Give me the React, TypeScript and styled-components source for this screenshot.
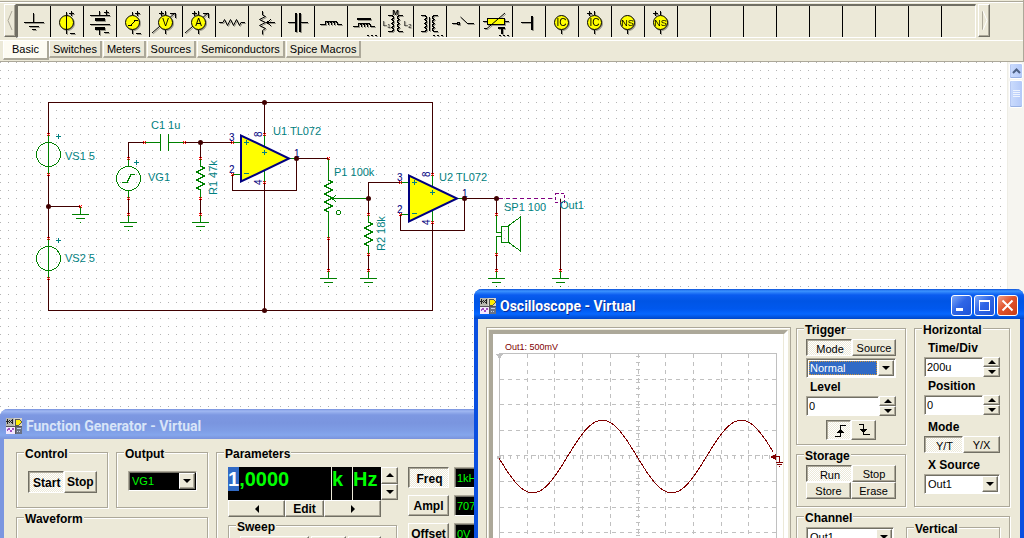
import React from "react";
import styled, { createGlobalStyle, css } from "styled-components";

const face = "#ece9d8";
const shade = "#aca899";
const dark = "#716f64";
const ui = `"Liberation Sans", Arial, sans-serif`;

const GlobalStyle = createGlobalStyle`
  *, *::before, *::after { box-sizing: border-box; }
  body { margin: 0; background: #fff; font: 11px/14px ${ui}; color: #000; }
  button, input, select { font: inherit; color: inherit; margin: 0; padding: 0; border-radius: 0; }
  svg { display: block; }
`;

const Page = styled.div`
  display: flex;
  flex-direction: column;
  height: 100vh;
  overflow: hidden;
`;

/* ---------- component palette ---------- */

const Header = styled.header`
  flex: none;
  padding-top: 1px;
  background: ${face};
  border-right: 1px solid ${shade};
  border-bottom: 1px solid ${shade};
`;

const Rule = styled.div`
  height: 2px;
  border-top: 1px solid ${shade};
  border-bottom: 1px solid #fff;
`;

const PaletteRow = styled.div`
  display: flex;
  align-items: flex-start;
  gap: 2px;
  padding: 1px 0 2px 4px;
`;

const raised = css`
  border: 1px solid;
  border-color: #fff ${dark} ${dark} #fff;
  box-shadow: inset -1px -1px 0 ${shade};
`;

const checker = css`
  background: repeating-conic-gradient(#fff 0 25%, ${face} 0 50%) 0 0 / 2px 2px;
`;

const PaletteArrow = styled.button`
  flex: none;
  width: 12px;
  height: 33px;
  background: ${face};
  ${raised}
`;

const PaletteStrip = styled.div`
  display: flex;
  min-width: 0;
  overflow: hidden;
  border: solid;
  border-width: 2px 1px 1px 2px;
  border-color: ${dark} #fff #fff ${dark};
  margin-left: -2px;
`;

const PaletteCell = styled.button`
  flex: none;
  width: 33px;
  height: 31px;
  background: ${face};
  border: 0;
  border-right: 1px solid #000;
  &:last-child { border-right: 0; }
  svg { filter: drop-shadow(1px 1px 0 #9a988c); }
`;

const TabBar = styled.nav`
  display: flex;
  align-items: flex-start;
  height: 21px;
  padding-left: 3px;
  border-top: 1px solid #fff;
`;

const Tab = styled.button<{ $on?: boolean }>`
  height: ${(p) => (p.$on ? 19 : 17)}px;
  padding: 0 ${(p) => (p.$on ? 8 : 3)}px;
  margin-right: ${(p) => (p.$on ? 0 : 1)}px;
  background: ${(p) => (p.$on ? "#fdfbf2" : face)};
  border: solid;
  border-width: 0 2px 2px 1px;
  border-color: #fff ${shade} ${shade} #fff;
  line-height: ${(p) => (p.$on ? 15 : 17)}px;
`;

/* ---------- sheet ---------- */

const Sheet = styled.main`
  position: relative;
  flex: 1;
  min-height: 0;
  overflow: hidden;
  display: flex;
  background: #fff;
`;

const Drawing = styled.div`
  flex: 1;
  min-width: 0;
  overflow: hidden;
  background: conic-gradient(from 270deg at 1px 1px, #b4b4b4 90deg, #fff 0) 0 0 / 8px 8px;
`;

const ScrollTrack = styled.div`
  flex: none;
  display: flex;
  flex-direction: column;
  gap: 1px;
  width: 17px;
  padding: 1px;
  background: #f6f5f0;
  border-left: 1px solid #eeede5;
`;

const ScrollPiece = styled.button<{ $thumb?: boolean }>`
  display: flex;
  align-items: center;
  justify-content: center;
  height: ${(p) => (p.$thumb ? 28 : 16)}px;
  background: linear-gradient(90deg, #cbdcfd, #b4c9f8);
  border: 1px solid #fff;
  border-radius: 2px;
  box-shadow: inset 0 -1px 0 #98b1e4, inset 1px 0 0 #b6c8f3;
`;

/* ---------- windows ---------- */

const Window = styled.section<{ $active?: boolean }>`
  position: absolute;
  background: ${face};
  border: solid;
  border-width: 0 4px 4px;
  border-color: ${(p) => (p.$active ? "#0a4fe0" : "#7b96e0")};
  border-radius: 8px 8px 0 0;
`;

const FunctionWindow = styled(Window)`
  left: 0;
  top: 347px;
  width: 560px;
`;

const ScopeWindow = styled(Window)`
  left: 474px;
  right: 0;
  top: 227px;
`;

const TitleBar = styled.header<{ $active?: boolean }>`
  display: flex;
  align-items: center;
  height: 30px;
  margin: 0 -4px;
  padding: 3px 6px 0;
  border-radius: 8px 8px 0 0;
  background: ${(p) =>
    p.$active
      ? "linear-gradient(#0a4fd8 0, #3c94ff 2px, #0a5cf0 6px, #0055e5 12px, #0058ee 20px, #0667ff 25px, #0046c8 30px)"
      : "linear-gradient(#7690de 0, #a0b8f2 2px, #7d98e2 6px, #7a95df 14px, #7f9ee6 22px, #84a6ec 26px, #7a93dc 30px)"};
`;

const Title = styled.h1<{ $active?: boolean }>`
  flex: 1;
  margin: 1px 0 0 4px;
  font: bold 14px/16px Roboto, "Open Sans", sans-serif;
  color: ${(p) => (p.$active ? "#fff" : "#d8e4f8")};
  ${(p) => (p.$active ? "text-shadow: 1px 1px 0 #0b2f97;" : "")}
`;

const Captions = styled.div`
  display: flex;
  gap: 2px;
`;

const Caption = styled.button<{ $close?: boolean }>`
  width: 21px;
  height: 21px;
  border: 1px solid #fff;
  border-radius: 3px;
  background: ${(p) =>
    p.$close
      ? "linear-gradient(135deg, #f0a088, #e2532c 45%, #c83c14)"
      : "linear-gradient(135deg, #7ea8f8, #2f66e6 45%, #1f54d8)"};
`;

const Group = styled.fieldset`
  min-width: 0;
  margin: 0;
  padding: 3px 9px 5px;
  border: 1px solid ${shade};
  box-shadow: inset 1px 1px 0 #fff, 1px 1px 0 #fff;
`;

const Legend = styled.legend<{ $wide?: boolean }>`
  margin-left: ${(p) => (p.$wide ? -4 : -2)}px;
  padding: 4px 1px 0;
  background: ${face};
  font-weight: bold;
  font-size: 12px;
  line-height: 12px;
`;

const Push = styled.button<{ $down?: boolean; $w?: number; $h?: number; $bold?: boolean }>`
  display: flex;
  align-items: center;
  justify-content: center;
  flex: ${(p) => (p.$w ? "none" : "1")};
  ${(p) => (p.$w ? `width: ${p.$w}px;` : "min-width: 0;")}
  height: ${(p) => p.$h ?? 17}px;
  background: ${face};
  ${raised}
  ${(p) => (p.$bold ? "font-weight: bold; font-size: 12px;" : "")}
  ${(p) =>
    p.$down &&
    css`
      ${checker}
      border-color: ${dark} #fff #fff ${dark};
      box-shadow: inset 1px 1px 0 ${shade};
      padding: 2px 0 0 2px;
    `}
`;

const Row = styled.div<{ $gap?: number }>`
  display: flex;
  gap: ${(p) => p.$gap ?? 0}px;
`;

const Stack = styled.div<{ $gap?: number }>`
  display: flex;
  flex-direction: column;
  gap: ${(p) => p.$gap ?? 0}px;
`;

const sunken = css`
  border: 1px solid;
  border-color: ${shade} #fff #fff ${shade};
  box-shadow: inset 1px 1px 0 ${dark};
`;

const ComboBox = styled.div<{ $dark?: boolean; $lit?: boolean }>`
  display: flex;
  height: 20px;
  padding: 1px;
  background: ${(p) => (p.$dark ? "#000" : "#fff")};
  ${sunken}
  select {
    flex: 1;
    min-width: 0;
    appearance: none;
    border: 0;
    margin: ${(p) => (p.$lit ? 1 : 0)}px;
    padding-left: ${(p) => (p.$lit ? 1 : 2)}px;
    background: ${(p) => (p.$lit ? "#316ac5" : "transparent")};
    color: ${(p) => (p.$dark ? "#00ff00" : p.$lit ? "#fff" : "#000")};
    ${(p) => (p.$lit ? "outline: 1px dotted #ce953a; outline-offset: -1px;" : "")}
  }
`;

const Drop = styled.span`
  display: flex;
  align-items: center;
  justify-content: center;
  flex: none;
  width: 16px;
  background: ${face};
  pointer-events: none;
  ${raised}
`;

const FieldLabel = styled.label`
  display: block;
  padding-left: 4px;
  font-weight: bold;
  font-size: 12px;
`;

const FieldTitle = styled(FieldLabel).attrs({ as: "span" })``;

const Spin = styled.div`
  display: flex;
  height: 20px;
  input {
    flex: 1;
    min-width: 0;
    padding-left: 2px;
    background: #fff;
    border-width: 1px;
    outline: 0;
    ${sunken}
  }
`;

const SpinButtons = styled.div`
  display: flex;
  flex-direction: column;
  flex: none;
  width: 17px;
  button {
    display: flex;
    align-items: center;
    justify-content: center;
    flex: 1;
    background: ${face};
    ${raised}
  }
`;

/* ---------- function generator ---------- */

const GeneratorBody = styled.div`
  display: flex;
  gap: 8px;
  padding: 5px 12px 12px;
`;

const SideColumn = styled.div`
  display: flex;
  flex-direction: column;
  gap: 1px;
  width: 192px;
`;

const SideGroups = styled.div`
  display: flex;
  gap: 8px;
`;

const SideGroup = styled(Group)`
  flex: 1;
  height: 64px;
  padding: 11px 10px 0 11px;
`;

const WaveGroup = styled(Group)`
  height: 110px;
`;

const ParameterGroup = styled(Group)`
  flex: 1;
  display: flex;
  gap: 11px;
  padding: 7px 11px;
`;

const ParameterBox = styled.div`
  display: flex;
  flex: 1;
  gap: 10px;
`;

const Readouts = styled.div`
  display: flex;
  gap: 1px;
  height: 33px;
  font: bold 20px/24px ${ui};
  color: #00ff00;
`;

const Digits = styled.output<{ $w: number }>`
  flex: none;
  width: ${(p) => p.$w}px;
  background: #000;
  b {
    display: inline-block;
    background: #316ac5;
    color: #fff;
  }
`;

const TallSpin = styled(SpinButtons)`
  height: 33px;
  width: 17px;
  margin-left: -1px;
`;

const SweepGroup = styled(Group)`
  width: 169px;
  height: 90px;
  padding: 3px 11px;
`;

const Value = styled.input`
  flex: 1;
  width: 80px;
  min-width: 0;
  height: 21px;
  padding: 0 2px;
  background: #000;
  color: #00ff00 !important;
  ${sunken}
`;

/* ---------- oscilloscope ---------- */

const ScopeBody = styled.div`
  display: flex;
  gap: 5px;
  padding: 1px 10px 10px 8px;
`;

const ScreenFrame = styled.div`
  flex: 1;
  min-width: 0;
  margin-top: 7px;
  padding: 2px;
  border: 1px solid ${shade};
  box-shadow: inset 1px 1px 0 #fff;
`;

const Screen = styled.div`
  height: 100%;
  overflow: hidden;
  background: #fff;
  border: 4px solid;
  border-color: ${shade} #fff #fff ${shade};
  box-shadow: inset -1px 0 0 ${face};
`;

const ControlColumn = styled.div`
  flex: none;
  display: flex;
  flex-direction: column;
  gap: 1px;
  width: 214px;
`;

const ControlGrid = styled.div`
  display: grid;
  grid-template-columns: 110px 96px;
  column-gap: 8px;
`;

const TriggerGroup = styled(Group)`
  height: 125px;
`;

const StorageGroup = styled(Group)`
  height: 61px;
`;

const HorizontalGroup = styled(Group)`
  padding-top: 5px;
`;

const ChannelGroup = styled(Group)`
  display: block;
  height: 110px;
`;

const ChannelRow = styled.div`
  display: flex;
  align-items: flex-start;
  gap: 12px;
`;

const VerticalGroup = styled(Group)`
  flex: 1;
  height: 90px;
  margin-top: -8px;
`;

const EdgeRow = styled.div`
  display: flex;
  justify-content: center;
  padding-top: 4px;
`;

const Spaced = styled.div`
  display: flex;
  flex-direction: column;
  gap: 2px;
  padding-top: 5px;
`;

const ChannelPick = styled.div`
  width: 88px;
`;

/* ---------- small glyphs ---------- */

const Triangle = ({ dir, s = 4 }: { dir: "up" | "down" | "left" | "right"; s?: number }) => {
  const d = {
    up: `M0 ${s}L${s} 0L${2 * s} ${s}Z`,
    down: `M0 0L${2 * s} 0L${s} ${s}Z`,
    left: `M${s} 0L0 ${s}L${s} ${2 * s}Z`,
    right: `M0 0L${s} ${s}L0 ${2 * s}Z`,
  }[dir];
  const v = dir === "up" || dir === "down";
  return (
    <svg width={v ? 2 * s : s} height={v ? s : 2 * s}>
      <path d={d} />
    </svg>
  );
};

const AppIcon = () => (
  <svg width="16" height="16" shapeRendering="crispEdges">
    <rect width="16" height="16" fill="#d8d4c8" />
    <rect width="8" height="8" fill="#b8b8b0" />
    <path d="M0 3h3M1 1v5M3 2l3 3M3 5l3-3M6 1v5" stroke="#222" fill="none" />
    <path d="M9 1h4l3 3l-3 3h-4z" fill="#ffee00" stroke="#555" />
    <rect x="0" y="8" width="9" height="8" fill="#f4e8ff" />
    <path d="M1 13l2-3l2 4l2-4l1 2" stroke="#a050c0" fill="none" />
    <rect x="10" y="9" width="6" height="7" fill="#6a7284" />
    <path d="M11 10.500h4M11 13.500h1M13 13.500h1" stroke="#c8d4e8" />
    <path d="M0 8h16M9.500 8v8" stroke="#555" />
  </svg>
);

const disc = <circle cx="15.500" cy="15.500" r="7" fill="#ffff00" stroke="#000" shapeRendering="auto" />;
const dots = <path d="M19 28.500h2M23 28.500h2M27 28.500h2" stroke="#000" />;
const plus = (x: number, y: number) => <path d={`M${x - 2} ${y + 0.5}h5M${x + 0.5} ${y - 2}v5`} />;
const glyph = (x: number, y: number, t: string, s = 10, bold = false) => (
  <text x={x} y={y} fontSize={s} fontFamily="Liberation Sans" fontWeight={bold ? 700 : 400} textAnchor="middle" fill="#000" stroke="none">
    {t}
  </text>
);

const paletteIcons: [string, React.ReactNode][] = [
  ["Ground", <><path d="M15.500 6v9" /><path d="M6 15.500h20M11 19.500h10M14 22.500h4" /></>],
  ["Voltage source", <>{disc}<path d="M15.500 5v22M19 26.500h5" />{plus(20, 6)}</>],
  ["Battery", <><path d="M15.500 4v4M6 8.500h20M6 17.500h20M15.500 22v6M20 25.500h5" /><path d="M11 12.500h10M11 21.500h10" strokeWidth="3" />{plus(22, 5)}</>],
  ["Voltage generator", <>{disc}<path d="M15.500 5v3M15.500 23v4M19 26.500h5M11 18.500h3l4-5h3" />{plus(20, 6)}</>],
  ["Voltmeter", <><path d="M2 26L25 6" shapeRendering="auto" /><path d="M20 6.500h5v4M15.500 4v4M15.500 23v4" />{disc}{glyph(15.5, 19, "V")}{plus(11, 6)}</>],
  ["Ammeter", <><path d="M2 26L25 6" shapeRendering="auto" /><path d="M20 6.500h5v4M15.500 4v4M15.500 23v4" />{disc}{glyph(15.5, 19, "A")}{plus(11, 6)}</>],
  ["Resistor", <path d="M3 15.500h4l1.500-3l3 6l3-6l3 6l3-6l3 6l1.500-3h4" shapeRendering="auto" />],
  ["Potentiometer", <><path d="M13.500 4v4l3 1.500l-6 3l6 3l-6 3l6 3l-3 2v4" shapeRendering="auto" /><path d="M18 15.500h8M22 12l-4 3.500l4 3.500" /></>],
  ["Capacitor", <><path d="M6 15.500h7M18 15.500h8" /><path d="M14 6v19M18 6v19" strokeWidth="2" /></>],
  ["Inductor", <path d="M5 17.500h5v-2q1.500-3 3 0v2v-2q1.500-3 3 0v2v-2q1.500-3 3 0v2v-2q1.500-3 3 0v2h5" />],
  ["Coil with core", <><path d="M5 19.500h5v-2q1.500-3 3 0v2v-2q1.500-3 3 0v2v-2q1.500-3 3 0v2v-2q1.500-3 3 0v2h5" /><path d="M9 12h14" strokeWidth="2" />{dots}</>],
  ["Coupled inductors", <>{glyph(14.5, 8, "M", 8, true)}{glyph(4, 19, "L", 8)}{glyph(8, 21, "1", 6)}{glyph(25, 19, "L", 8)}{glyph(29, 21, "2", 6)}<path d="M7 8.500h4q3 2 0 4q3 2 0 4q3 2 0 4q3 2 0 4h-4M22 8.500h-4q-3 2 0 4q-3 2 0 4q-3 2 0 4q-3 2 0 4h4" /></>],
  ["Transformer", <><path d="M7 8.500h4q3 2 0 4q3 2 0 4q3 2 0 4q3 2 0 4h-4M24 8.500h-4q-3 2 0 4q-3 2 0 4q-3 2 0 4q-3 2 0 4h4M15.500 10v14" />{dots}</>],
  ["Switch", <><path d="M5 16.500h5M20 16.500h7" /><circle cx="11.500" cy="16.500" r="1.500" fill="none" /><path d="M13.500 10l7 6.500" shapeRendering="auto" /></>],
  ["Thermistor", <><path d="M3 14.500h26" /><rect x="7.500" y="11.500" width="17" height="6" fill="#ffff00" /><path d="M4 21.500h3L25 6" shapeRendering="auto" /><path d="M18 21h7M21.500 21v6" strokeWidth="2" />{dots}</>],
  ["Terminal", <><path d="M8 15.500h12" /><path d="M19 9v14" strokeWidth="2" /></>],
  ["Current controlled source", <>{disc}<path d="M15.500 23v4" />{glyph(15.5, 19, "IC")}</>],
  ["Positive current source", <>{disc}<path d="M15.500 4v4M15.500 23v4" />{glyph(15.5, 19, "IC")}{plus(10, 6)}</>],
  ["Net source", <>{disc}<path d="M15.500 23v4" />{glyph(15.5, 19, "NS", 9)}</>],
  ["Positive net source", <>{disc}<path d="M15.500 4v4M15.500 23v4" />{glyph(15.5, 19, "NS", 9)}{plus(10, 6)}</>],
];

/* ---------- schematic ---------- */

const wire = "#400000";
const green = "#008000";
const teal = "#008080";

const Pin = ({ x, y }: { x: number; y: number }) => (
  <path
    d={`M${x - 1} ${y - 1}h1v1h-1zM${x + 1} ${y - 1}h1v1h-1zM${x - 1} ${y + 1}h1v1h-1zM${x + 1} ${y + 1}h1v1h-1zM${x} ${y}h1v1h-1z`}
    fill="#ff0000"
    stroke="none"
  />
);
const Node = ({ x, y }: { x: number; y: number }) => (
  <circle cx={x + 0.5} cy={y + 0.5} r="2.500" fill={wire} stroke="none" shapeRendering="auto" />
);
const Ground = ({ x, y }: { x: number; y: number }) => (
  <>
    <path d={`M${x + 0.5} ${y}v8M${x - 8} ${y + 8.5}h17M${x - 4} ${y + 12.5}h9M${x} ${y + 16.5}h1`} stroke={green} />
    <Pin x={x} y={y} />
  </>
);
const Label = ({ x, y, children, up, color = teal, size = 11 }: { x: number; y: number; children: string; up?: boolean; color?: string; size?: number }) => (
  <text x={x} y={y} fill={color} fontSize={size} fontFamily="Liberation Sans" transform={up ? `rotate(-90 ${x} ${y})` : undefined}>
    {children}
  </text>
);
const Plus = ({ x, y }: { x: number; y: number }) => (
  <path d={`M${x - 2} ${y + 0.5}h5M${x + 0.5} ${y - 2}v5`} stroke={teal} />
);
const Resistor = ({ x, y }: { x: number; y: number }) => (
  <path d={`M${x + 0.5} ${y}v8l4 2l-8 4l8 4l-8 4l8 4l-8 4l4 2v8`} stroke={green} fill="none" />
);
const OpAmp = ({ dx, dy }: { dx: number; dy: number }) => (
  <g transform={`translate(${dx} ${dy})`} fill="none">
    <path d="M232 190.500h64.500v-32M232.500 174v16" stroke={wire} />
    <path d="M232 142.500h8M232 174.500h8M288 158.500h8M264.500 134v14M264.500 168v14" stroke={green} />
    <path d="M241 135.500v46l48-23z" fill="#ffff00" stroke="#000080" strokeWidth="2" shapeRendering="auto" />
    <Plus x={246} y={142} />
    <Plus x={264} y={152} />
    <path d="M244 173.500h5" stroke={teal} />
    <Label x={229} y={141} color="#000080" size={10}>3</Label>
    <Label x={229} y={173} color="#000080" size={10}>2</Label>
    <Label x={294} y={157} color="#000080" size={10}>1</Label>
    <Label x={262} y={137} color="#000080" size={10} up>8</Label>
    <Label x={262} y={185} color="#000080" size={10} up>4</Label>
    <Pin x={232} y={142} />
    <Pin x={232} y={174} />
    <Pin x={264} y={134} />
    <Pin x={264} y={182} />
    <Node x={296} y={158} />
  </g>
);

const Schematic = () => (
  <svg width="640" height="260" shapeRendering="crispEdges">
    <g transform="translate(0 -62)">
      <path
        d="M48.500 310V102.500H432.500V310.500H48M48 206.500h32M128.500 158V142.500h16M184 142.500h48M128.500 198v16M200.500 142v16M200.500 198v16M264.500 102v32M264.500 182v128M296 158.500h32M328.500 238v32M368.500 214V182.500h32M368.500 254v16M464 198.500h32M496.500 198v16M496.500 254v16M560.500 199v71"
        stroke={wire}
        fill="none"
      />
      {[154, 258].map((y) => (
        <g key={y} stroke={green} fill="none">
          <path d={`M48.500 ${y - 20}v40`} />
          <circle cx="48.500" cy={y + 0.5} r="12" />
          <Pin x={48} y={y - 20} />
          <Pin x={48} y={y + 20} />
          <Plus x={58} y={y - 18} />
        </g>
      ))}
      <g stroke={green} fill="none">
        <path d="M128.500 158v8M128.500 190v8M122 182.500h5l4-8h4" />
        <circle cx="128.500" cy="178.500" r="12" />
        <path d="M144 142.500h16M160.500 134v17M168.500 134v17M168 142.500h16" />
        <path d="M328.500 158v22l4 2l-8 4l8 4l-8 4l8 4l-8 4l8 4l-8 4l4 2v26M332 198.500h36M336 195l-4 3.500l4 3.500" />
        <circle cx="338.500" cy="212.500" r="2" />
        <path d="M496.500 214v18.500h5M501 236.500h-4.500v18M501.500 226.500h7v16h-7zM508 226l12.500-9v34l-12.500-9" />
      </g>
      <Resistor x={200} y={158} />
      <Resistor x={368} y={214} />
      <Plus x={136} y={162} />
      <OpAmp dx={0} dy={0} />
      <OpAmp dx={168} dy={40} />
      <path d="M499 198.500h57" stroke="#800080" strokeDasharray="4 3" />
      <rect x="555.500" y="193.500" width="9" height="9" fill="none" stroke="#800080" strokeDasharray="3 2" />
      <Ground x={80} y={206} />
      <Ground x={128} y={214} />
      <Ground x={200} y={214} />
      <Ground x={328} y={270} />
      <Ground x={368} y={270} />
      <Ground x={496} y={270} />
      <Ground x={560} y={270} />
      {[[128, 158], [128, 198], [144, 142], [184, 142], [200, 158], [200, 198], [328, 158], [328, 238], [368, 214], [368, 254], [496, 214], [496, 254]].map(([x, y]) => (
        <Pin key={`${x}-${y}`} x={x} y={y} />
      ))}
      {[[48, 206], [200, 142], [264, 102], [264, 310], [368, 198], [496, 198]].map(([x, y]) => (
        <Node key={`${x}-${y}`} x={x} y={y} />
      ))}
      <Label x={65} y={160}>VS1 5</Label>
      <Label x={65} y={262}>VS2 5</Label>
      <Label x={148} y={181}>VG1</Label>
      <Label x={151} y={129}>C1 1u</Label>
      <Label x={217} y={195} up>R1 47k</Label>
      <Label x={273} y={135}>U1 TL072</Label>
      <Label x={334} y={176}>P1 100k</Label>
      <Label x={385} y={251} up>R2 18k</Label>
      <Label x={439} y={181}>U2 TL072</Label>
      <Label x={504} y={211}>SP1 100</Label>
      <Label x={560} y={209}>Out1</Label>
    </g>
  </svg>
);

/* ---------- scope trace ---------- */

const colX = Array.from({ length: 9 }, (_, i) => Math.round(6 + (i + 1) * 27.7) + 0.5);
const rowY = Array.from({ length: 9 }, (_, i) => Math.round(19 + (i + 1) * 25.6) + 0.5);
const trace = Array.from({ length: 138 }, (_, i) => {
  const x = 6 + i * 2;
  return `${x},${(122.5 + 36.3 * Math.sin((2 * Math.PI * (x - 5)) / 139)).toFixed(1)}`;
}).join(" ");

const Trace = () => (
  <svg width="290" height="290" shapeRendering="crispEdges">
    <g stroke="#c0c0c0" fill="none">
      <rect x="6.500" y="19.500" width="277" height="256" />
      {colX.map((x) => <path key={x} d={`M${x} 20v256`} strokeDasharray="4 4" />)}
      {rowY.map((y) => <path key={y} d={`M7 ${y}h276`} strokeDasharray="4 4" />)}
      <path d="M144.500 22v252" strokeWidth="4" strokeDasharray="1 5.400" />
      <path d="M10 122.500h270" strokeWidth="4" strokeDasharray="1 6" />
      <path d="M3 20h7l-3.500 5zM4 122h4v3h-4z" fill="#c0c0c0" stroke="none" />
    </g>
    <polyline points={trace} fill="none" stroke="#800000" />
    <path d="M277 123l6-3v6z" fill="#800000" />
    <path d="M281 122.500h5.500v5M283 128.500h7M284 130.500h5M286 132.500h1" fill="none" stroke="#800000" />
    <text x="12" y="16" fontSize="9" fontFamily="Liberation Sans" fill="#800000">Out1: 500mV</text>
  </svg>
);

const Combo = ({ id, value, label, darkBox, lit }: { id: string; value: string; label?: string; darkBox?: boolean; lit?: boolean }) => (
  <ComboBox $dark={darkBox} $lit={lit}>
    <select id={id} aria-label={label}>
      <option>{value}</option>
    </select>
    <Drop><Triangle dir="down" /></Drop>
  </ComboBox>
);

const NumberField = ({ id, value }: { id: string; value: string }) => (
  <Spin>
    <input id={id} type="text" defaultValue={value} />
    <SpinButtons>
      <button aria-label="Increase"><Triangle dir="up" /></button>
      <button aria-label="Decrease"><Triangle dir="down" /></button>
    </SpinButtons>
  </Spin>
);

const FunctionGenerator = () => (
  <FunctionWindow>
    <TitleBar>
      <AppIcon />
      <Title>Function Generator - Virtual</Title>
    </TitleBar>
    <GeneratorBody>
      <SideColumn>
        <SideGroups>
          <SideGroup>
            <Legend $wide>Control</Legend>
            <Row>
              <Push $bold $down $h={22}>Start</Push>
              <Push $bold $h={22}>Stop</Push>
            </Row>
          </SideGroup>
          <SideGroup>
            <Legend $wide>Output</Legend>
            <Combo id="output" value="VG1" label="Output" darkBox />
          </SideGroup>
        </SideGroups>
        <WaveGroup>
          <Legend>Waveform</Legend>
        </WaveGroup>
      </SideColumn>
      <ParameterGroup>
        <Legend $wide>Parameters</Legend>
        <ParameterBox>
          <Stack>
            <Readouts>
              <Digits $w={103}><b>1</b>,0000</Digits>
              <Digits $w={20}>k</Digits>
              <Digits $w={28}>Hz</Digits>
              <TallSpin>
                <button aria-label="Increase"><Triangle dir="up" /></button>
                <button aria-label="Decrease"><Triangle dir="down" /></button>
              </TallSpin>
            </Readouts>
            <Row>
              <Push $w={57} aria-label="Previous digit"><Triangle dir="left" /></Push>
              <Push $w={39} $bold>Edit</Push>
              <Push $w={57} aria-label="Next digit"><Triangle dir="right" /></Push>
            </Row>
            <SweepGroup>
              <Legend $wide>Sweep</Legend>
              <Row $gap={2}>
                <Push $w={69} />
                <Push $w={35} />
                <Push $w={33} />
              </Row>
            </SweepGroup>
          </Stack>
          <Stack $gap={7}>
            {[["Freq", "1kHz"], ["Ampl", "707.1mV"], ["Offset", "0V"]].map(([name, value], i) => (
              <Row key={name} $gap={5}>
                <Push $w={41} $h={21} $bold $down={i === 0}>{name}</Push>
                <Value aria-label={name} defaultValue={value} />
              </Row>
            ))}
          </Stack>
        </ParameterBox>
      </ParameterGroup>
    </GeneratorBody>
  </FunctionWindow>
);

const Oscilloscope = () => (
  <ScopeWindow $active>
    <TitleBar $active>
      <AppIcon />
      <Title $active>Oscilloscope - Virtual</Title>
      <Captions>
        <Caption aria-label="Minimize">
          <svg width="19" height="19"><path d="M4 13.500h7" stroke="#fff" strokeWidth="3" /></svg>
        </Caption>
        <Caption aria-label="Maximize">
          <svg width="19" height="19" shapeRendering="crispEdges"><path d="M4.500 5v9.500h10V5M4 5.500h11" fill="none" stroke="#fff" /><path d="M4 5h11" stroke="#fff" strokeWidth="2" /></svg>
        </Caption>
        <Caption $close aria-label="Close">
          <svg width="19" height="19"><path d="M4.500 4.500l10 10M14.500 4.500l-10 10" stroke="#fff" strokeWidth="2" /></svg>
        </Caption>
      </Captions>
    </TitleBar>
    <ScopeBody>
      <ScreenFrame>
        <Screen><Trace /></Screen>
      </ScreenFrame>
      <ControlColumn>
        <ControlGrid>
          <Stack $gap={1}>
            <TriggerGroup>
              <Legend>Trigger</Legend>
              <Stack $gap={2}>
                <Row>
                  <Push $down>Mode</Push>
                  <Push>Source</Push>
                </Row>
                <Combo id="trigger" value="Normal" label="Trigger mode" lit />
                <FieldLabel htmlFor="level">Level</FieldLabel>
                <NumberField id="level" value="0" />
              </Stack>
              <EdgeRow>
                <Push $w={25} $h={20} $down aria-label="Rising edge">
                  <svg width="12" height="14" shapeRendering="crispEdges"><path d="M1 12.500h5.500v-11h5" fill="none" stroke="#000" /><path d="M3 8.500l3.500-4l3.500 4z" /></svg>
                </Push>
                <Push $w={25} $h={20} aria-label="Falling edge">
                  <svg width="12" height="14" shapeRendering="crispEdges"><path d="M1 1.500h4.500v10h6" fill="none" stroke="#000" /><path d="M2 6l3.500 4l3.500-4z" /></svg>
                </Push>
              </EdgeRow>
            </TriggerGroup>
            <StorageGroup>
              <Legend>Storage</Legend>
              <Row>
                <Push $down>Run</Push>
                <Push>Stop</Push>
              </Row>
              <Row>
                <Push>Store</Push>
                <Push>Erase</Push>
              </Row>
            </StorageGroup>
          </Stack>
          <HorizontalGroup>
            <Legend>Horizontal</Legend>
            <Stack $gap={2}>
              <FieldLabel htmlFor="timediv">Time/Div</FieldLabel>
              <NumberField id="timediv" value="200u" />
              <FieldLabel htmlFor="position">Position</FieldLabel>
              <NumberField id="position" value="0" />
            </Stack>
            <Spaced>
              <FieldTitle>Mode</FieldTitle>
              <Row>
                <Push $down>Y/T</Push>
                <Push>Y/X</Push>
              </Row>
            </Spaced>
            <Spaced>
              <FieldLabel htmlFor="xsource">X Source</FieldLabel>
              <Combo id="xsource" value="Out1" />
            </Spaced>
          </HorizontalGroup>
        </ControlGrid>
        <ChannelGroup>
          <Legend>Channel</Legend>
          <ChannelRow>
            <ChannelPick><Combo id="channel" value="Out1" label="Channel" /></ChannelPick>
            <VerticalGroup>
              <Legend>Vertical</Legend>
            </VerticalGroup>
          </ChannelRow>
        </ChannelGroup>
      </ControlColumn>
    </ScopeBody>
  </ScopeWindow>
);

export default function App() {
  return (
    <Page>
      <GlobalStyle />
      <Header>
        <Rule />
        <PaletteRow>
          <PaletteArrow aria-label="Scroll left">
            <svg width="10" height="31"><path d="M7 6L3 15.500L7 25" fill="none" stroke={shade} /></svg>
          </PaletteArrow>
          <PaletteStrip>
            {Array.from({ length: 29 }, (_, i) => (
              <PaletteCell key={i} aria-label={paletteIcons[i]?.[0] ?? "Empty"}>
                {paletteIcons[i] && (
                  <svg width="32" height="30" shapeRendering="crispEdges" stroke="#000" fill="none">
                    {paletteIcons[i][1]}
                  </svg>
                )}
              </PaletteCell>
            ))}
          </PaletteStrip>
          <PaletteArrow aria-label="Scroll right">
            <svg width="10" height="31"><path d="M3.500 6v19" stroke={shade} /><path d="M4 6L8 15.500L4 25" fill="none" stroke="#fff" /></svg>
          </PaletteArrow>
        </PaletteRow>
        <TabBar>
          <Tab $on>Basic</Tab>
          <Tab>Switches</Tab>
          <Tab>Meters</Tab>
          <Tab>Sources</Tab>
          <Tab>Semiconductors</Tab>
          <Tab>Spice Macros</Tab>
        </TabBar>
      </Header>
      <Sheet>
        <Drawing><Schematic /></Drawing>
        <ScrollTrack>
          <ScrollPiece aria-label="Scroll up">
            <svg width="9" height="6"><path d="M1 5l3.500-3.500L8 5" fill="none" stroke="#4d6185" strokeWidth="2" /></svg>
          </ScrollPiece>
          <ScrollPiece $thumb aria-label="Scroll thumb">
            <svg width="7" height="8"><path d="M0 .5h7M0 2.500h7M0 4.500h7M0 6.500h7" stroke="#eef4fe" /></svg>
          </ScrollPiece>
        </ScrollTrack>
        <FunctionGenerator />
        <Oscilloscope />
      </Sheet>
    </Page>
  );
}
